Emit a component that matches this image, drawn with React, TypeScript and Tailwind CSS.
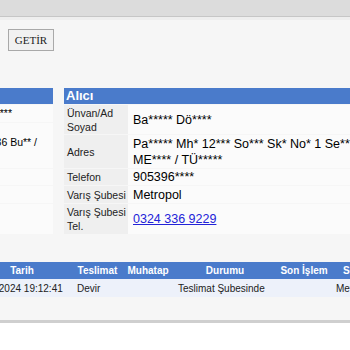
import React from "react"

const aliciRows = [
  { label: ["Ünvan/Ad", "Soyad"], value: ["Ba***** Dö****"], h: "h-[29px]" },
  { label: ["Adres"], value: ["Pa***** Mh* 12*** So*** Sk* No* 1 Se***", "ME**** / TÜ*****"], h: "h-[33px]" },
  { label: ["Telefon"], value: ["905396****"], h: "h-[16px]" },
  { label: ["Varış Şubesi"], value: ["Metropol"], h: "h-[17px]" },
]

const hareketCols = [
  { name: "Tarih", w: "w-[106px] pl-[6px]" },
  { name: "Teslimat", w: "w-[51px]" },
  { name: "Muhatap", w: "w-[50px]" },
  { name: "Durumu", w: "w-[104px]" },
  { name: "Son İşlem", w: "w-[54px]" },
  { name: "Son Şube", w: "w-[70px]" },
]

const hareketRow = ["10.05.2024 19:12:41", "Devir", "", "Teslimat Şubesinde", "", "Metropol"]

export default function App() {
  return (
    <div className="w-[350px] h-[350px] overflow-hidden bg-white font-['Liberation_Sans',Arial,sans-serif] text-black">
      {/* top bar */}
      <div className="h-[17px] bg-[#dcdcdc] border-b border-[#c6c6c6]" />
      <div className="h-[3px] bg-[#eeeeee]" />

      <div className="bg-[#f6f6f6] pb-[23px]">
        <div className="pt-[7px] pl-[8px]">
          <button className="h-[22px] w-[46px] border border-[#a9a9a9] bg-[#f1f1f1] font-['Liberation_Serif',serif] text-[11px] text-[#222]">
            GETİR
          </button>
        </div>

        {/* gönderici / alıcı */}
        <div className="mt-[37px] flex items-start gap-[11px]">
          {/* gönderici, mostly scrolled off */}
          <div className="w-[200px] shrink-0 -ml-[147px] text-[10.5px]">
            <div className="h-[16px] bg-[#4a7bcb] pl-1 text-[13px] font-bold leading-[16px] text-white">Gönderici</div>
            <div className="mt-px flex h-[17px] items-center justify-end bg-[#fbfbfb] pr-[41px]">
              <span className="whitespace-nowrap">Ah***** Yı***</span>
            </div>
            <div className="mt-px flex h-[45px] flex-col items-end bg-[#fbfbfb] pr-[16px] pt-[12px] leading-[14px]">
              <span className="whitespace-nowrap">Ka****** Mh* 36 Bu** /</span>
            </div>
            <div className="mt-px h-[16px] bg-[#fbfbfb]" />
            <div className="mt-px h-[17px] bg-[#fbfbfb]" />
            <div className="mt-px h-[30px] bg-[#fbfbfb]" />
          </div>

          {/* alıcı */}
          <div className="w-[420px] shrink-0">
            <div className="h-[16px] bg-[#4a7bcb] pl-[2px] text-[13px] font-bold leading-[16px] text-white">Alıcı</div>
            {aliciRows.map((r) => (
              <div key={r.label.join(" ")} className={`mt-px flex ${r.h}`}>
                <div className="flex w-[64px] shrink-0 flex-col justify-center bg-[#efefef] pl-[3px] text-[10.5px] leading-[14px] whitespace-nowrap text-[#222]">
                  {r.label.map((l) => (
                    <span key={l}>{l}</span>
                  ))}
                </div>
                <div className="flex flex-1 flex-col justify-center bg-[#fbfbfb] pl-[5px] text-[12.5px] leading-[16px]">
                  {r.value.map((v) => (
                    <span key={v} className="whitespace-nowrap">{v}</span>
                  ))}
                </div>
              </div>
            ))}
            <div className="mt-px flex h-[30px]">
              <div className="flex w-[64px] shrink-0 flex-col justify-center bg-[#efefef] pl-[3px] text-[10.5px] leading-[14px] whitespace-nowrap text-[#222]">
                <span>Varış Şubesi</span>
                <span>Tel.</span>
              </div>
              <div className="flex flex-1 items-center bg-[#fbfbfb] pl-[5px] text-[12.5px]">
                <a href="#" className="text-[#2323d8] underline">0324 336 9229</a>
              </div>
            </div>
          </div>
        </div>

        {/* hareketler */}
        <div className="mt-[28px] -ml-[34px] w-[450px] text-[10px]">
          <div className="flex h-[17px] items-center bg-[#4a7bcb] font-bold text-white">
            {hareketCols.map((c) => (
              <div key={c.name} className={`${c.w} shrink-0 text-center`}>{c.name}</div>
            ))}
          </div>
          <div className="flex h-[18px] items-center bg-[#edf1fa] text-[#222]">
            {hareketRow.map((v, i) => (
              <div key={i} className={`${hareketCols[i].w.split(" ")[0]} shrink-0 whitespace-nowrap pl-[5px]`}>{v}</div>
            ))}
          </div>
        </div>
      </div>
      <div className="h-[3px] bg-[#cfcfcf]" />
    </div>
  )
}
